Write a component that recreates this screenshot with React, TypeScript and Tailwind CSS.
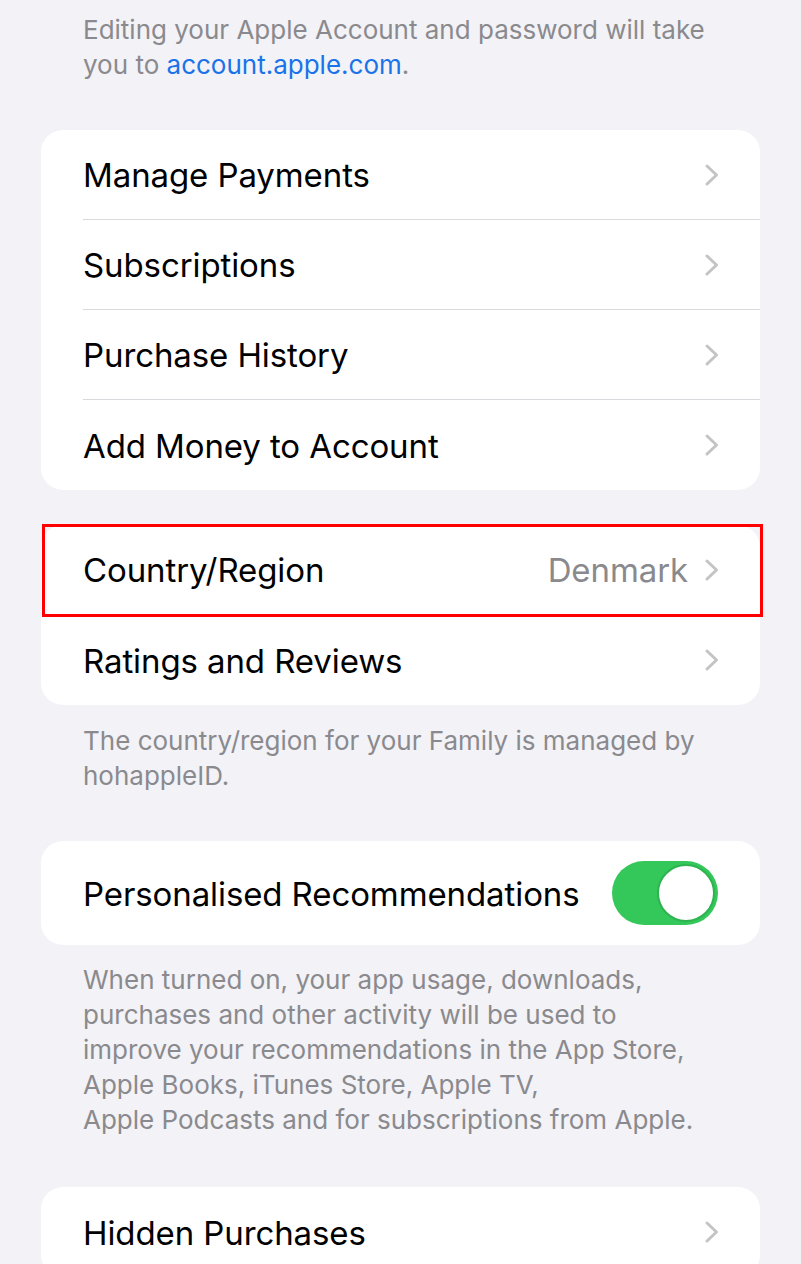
const Chevron = () => (
  <svg width="16" height="24" viewBox="0 0 16 24" fill="none" className="shrink-0">
    <polyline
      points="3,3 12.5,12 3,21"
      stroke="#c4c4c7"
      strokeWidth="3"
      strokeLinecap="round"
      strokeLinejoin="round"
    />
  </svg>
);

const Row = ({ label, value, last }: { label: string; value?: string; last?: boolean }) => (
  <div className="flex h-[90px] items-center pl-[42px]">
    <div
      className={`flex h-full flex-1 items-center justify-between pr-[40px] ${
        last ? "" : "border-b border-[#d9d9dd]"
      }`}
    >
      <span className="pt-[3px] text-[33px] text-black tracking-[-0.1px]">{label}</span>
      <div className="flex items-center gap-[16px]">
        {value && <span className="pt-[3px] text-[33px] text-[#8a8a8e] tracking-[-0.1px]">{value}</span>}
        <Chevron />
      </div>
    </div>
  </div>
);

const Footer = ({ children }: { children: React.ReactNode }) => (
  <p className="px-[83px] text-[26px] leading-[35px] text-[#8a8a8e]">{children}</p>
);

export default function App() {
  return (
    <div
      className="min-h-[1264px] w-[801px] overflow-hidden bg-[#f2f2f7] pt-[12px]"
      style={{ fontFamily: "Inter, 'Noto Sans', sans-serif" }}
    >
      <Footer>
        Editing your Apple Account and password will take
        <br />
        you to <span className="text-[#1a73e8]">account.apple.com</span>.
      </Footer>

      <div className="mx-[41px] mt-[48px] overflow-hidden rounded-[22px] bg-white">
        <Row label="Manage Payments" />
        <Row label="Subscriptions" />
        <Row label="Purchase History" />
        <Row label="Add Money to Account" last />
      </div>

      <div className="relative mx-[41px] mt-[35px] rounded-[22px] bg-white">
        <Row label="Country/Region" value="Denmark" />
        <Row label="Ratings and Reviews" last />
        <div className="pointer-events-none absolute left-[1px] right-[-3px] top-[-1px] h-[93px] border-[3px] border-[#ff0000]" />
      </div>

      <div className="mt-[18px]">
        <Footer>
          The country/region for your Family is managed by
          <br />
          hohappleID.
        </Footer>
      </div>

      <div className="mx-[41px] mt-[48px] flex h-[104px] items-center justify-between rounded-[22px] bg-white pl-[42px] pr-[42px]">
        <span className="pt-[3px] text-[33px] text-black tracking-[-0.1px]">Personalised Recommendations</span>
        <div className="flex h-[64px] w-[106px] items-center justify-end rounded-full bg-[#34c759] p-[3px]">
          <div className="h-[58px] w-[58px] rounded-full border-[2px] border-[#2fb350] bg-white" />
        </div>
      </div>

      <div className="mt-[17px]">
        <Footer>
          When turned on, your app usage, downloads,
          <br />
          purchases and other activity will be used to
          <br />
          improve your recommendations in the App Store,
          <br />
          Apple Books, iTunes Store, Apple TV,
          <br />
          Apple Podcasts and for subscriptions from Apple.
        </Footer>
      </div>

      <div className="mx-[41px] mt-[50px] rounded-[22px] bg-white">
        <Row label="Hidden Purchases" last />
      </div>
    </div>
  );
}
